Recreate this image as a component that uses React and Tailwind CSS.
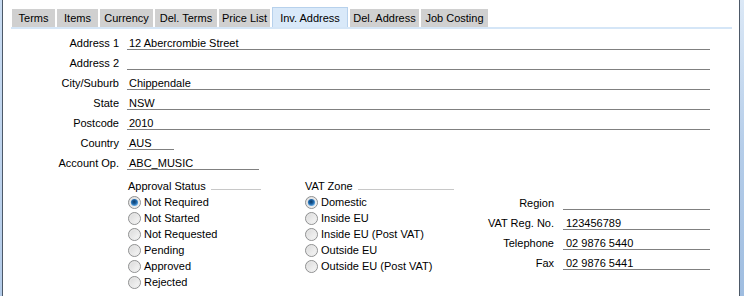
import React from "react";

const tabs = [
  { label: "Terms", w: "w-[43px]" },
  { label: "Items", w: "w-[41px]" },
  { label: "Currency", w: "w-[53px]" },
  { label: "Del. Terms", w: "w-[62px]" },
  { label: "Price List", w: "w-[51px]" },
  { label: "Inv. Address", w: "w-[76px]", active: true },
  { label: "Del. Address", w: "w-[69px]" },
  { label: "Job Costing", w: "w-[67px]" },
];

const addressRows = [
  { label: "Address 1", value: "12 Abercrombie Street" },
  { label: "Address 2", value: "" },
  { label: "City/Suburb", value: "Chippendale" },
  { label: "State", value: "NSW" },
  { label: "Postcode", value: "2010" },
  { label: "Country", value: "AUS", w: "w-[47px]" },
  { label: "Account Op.", value: "ABC_MUSIC", w: "w-[132px]" },
];

const approval = ["Not Required", "Not Started", "Not Requested", "Pending", "Approved", "Rejected"];
const vatZones = ["Domestic", "Inside EU", "Inside EU (Post VAT)", "Outside EU", "Outside EU (Post VAT)"];

const contact = [
  { label: "Region", value: "" },
  { label: "VAT Reg. No.", value: "123456789" },
  { label: "Telephone", value: "02 9876 5440" },
  { label: "Fax", value: "02 9876 5441" },
];

function Radio({ checked }) {
  return (
    <svg width="13" height="13" viewBox="0 0 13 13" className="shrink-0">
      <defs>
        <linearGradient id="rbg" x1="0" y1="0" x2="1" y2="1">
          <stop offset="0" stopColor="#d6d6d6" />
          <stop offset="1" stopColor="#fbfbfb" />
        </linearGradient>
        <radialGradient id="rdot" cx="0.45" cy="0.4" r="0.6">
          <stop offset="0" stopColor="#0d3a66" />
          <stop offset="0.55" stopColor="#1f66a8" />
          <stop offset="1" stopColor="#6fb3ea" />
        </radialGradient>
      </defs>
      <circle cx="6.5" cy="6.5" r="6" fill="url(#rbg)" stroke="#8f9091" strokeWidth="1" />
      <circle cx="6.5" cy="6.5" r="4.6" fill="none" stroke="#e9e9e9" strokeWidth="0.8" />
      {checked && <circle cx="6.5" cy="6.5" r="3.6" fill="url(#rdot)" />}
    </svg>
  );
}

function RadioGroup({ title, lineW, items, width }) {
  return (
    <div className={`${width} shrink-0`}>
      <div className="flex items-end h-[15px]">
        <span className="leading-[12px] pb-[2px]">{title}</span>
        <div className={`h-px bg-[#c8c8c8] mb-[4px] ml-[5px] ${lineW}`} />
      </div>
      {items.map((item, i) => (
        <div key={item} className="flex items-center h-[16px]">
          <Radio checked={i === 0} />
          <span className="ml-[3px] leading-[16px]">{item}</span>
        </div>
      ))}
    </div>
  );
}

export default function App() {
  return (
    <div
      className="w-[744px] h-[296px] flex bg-white text-[11px] text-black overflow-hidden"
      style={{ fontFamily: '"Liberation Sans", Arial, sans-serif' }}
    >
      {/* left frame */}
      <div className="w-[2px] bg-gradient-to-b from-[#c9dcf2] to-[#b3cbe8]" />
      <div className="w-px bg-[#4d5968]" />

      <div className="w-[736px] flex flex-col">
        {/* Tabs */}
        <div className="ml-[8px] w-[721px]">
          <div className="flex items-end h-[27px] pt-[7px] pl-px gap-[2px]">
            {tabs.map((t) =>
              t.active ? (
                <div
                  key={t.label}
                  className={`${t.w} h-[20px] pt-px text-center leading-[18px] bg-[#d9e9f9] border border-b-0 border-[#b7d1ec]`}
                >
                  {t.label}
                </div>
              ) : (
                <div key={t.label} className={`${t.w} h-[18px] text-center leading-[18px] bg-[#d0d0d0]`}>
                  {t.label}
                </div>
              )
            )}
          </div>
          <div className="h-[2px] bg-[#d5e6f7]" />
        </div>

        {/* Address fields */}
        <div className="mt-px flex flex-col">
          {addressRows.map((r) => (
            <div key={r.label} className="flex h-[20px]">
              <div className="w-[116px] flex items-end justify-end pb-px">
                <span className="leading-[12px]">{r.label}</span>
              </div>
              <div className={`ml-[8px] ${r.w || "w-[583px]"} flex items-end border-b border-[#808080] pl-[2px]`}>
                <span className="leading-[12px] whitespace-nowrap">{r.value}</span>
              </div>
            </div>
          ))}
        </div>

        {/* Lower section */}
        <div className="mt-[9px] flex pl-[125px]">
          <RadioGroup title="Approval Status" lineW="w-[50px]" items={approval} width="w-[177px]" />
          <RadioGroup title="VAT Zone" lineW="w-[96px]" items={vatZones} width="w-[150px]" />
          <div className="mt-[11px] flex flex-col">
            {contact.map((c) => (
              <div key={c.label} className="flex h-[20px]">
                <div className="w-[99px] flex items-end justify-end pb-px">
                  <span className="leading-[12px] whitespace-nowrap">{c.label}</span>
                </div>
                <div className="ml-[9px] w-[147px] flex items-end border-b border-[#808080] pl-[3px]">
                  <span className="leading-[12px] whitespace-nowrap">{c.value}</span>
                </div>
              </div>
            ))}
          </div>
        </div>
      </div>

      {/* right frame */}
      <div className="w-px bg-[#4d5968]" />
      <div className="w-[4px] bg-gradient-to-b from-[#dbe8f6] via-[#b5cde9] to-[#9fbde0]" />
    </div>
  );
}
